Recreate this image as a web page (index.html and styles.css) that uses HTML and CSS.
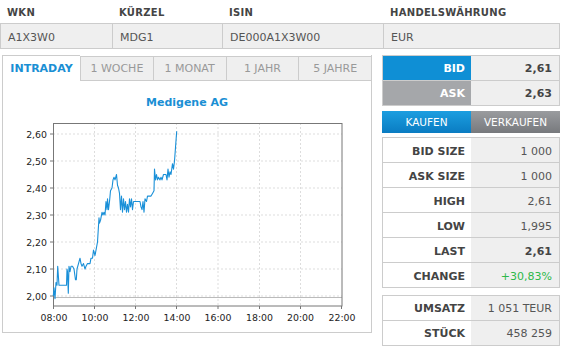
FILE: index.html
```html
<!DOCTYPE html>
<html lang="de">
<head>
  <meta charset="UTF-8">
  <title>Medigene AG</title>
  <link rel="stylesheet" href="styles.css">
</head>
<body>
  <div class="page">
    <div class="info-head">
      <div class="info-label">WKN</div>
      <div class="info-label">KÜRZEL</div>
      <div class="info-label">ISIN</div>
      <div class="info-label">HANDELSWÄHRUNG</div>
    </div>
    <div class="info-row">
      <div class="info-cell">A1X3W0</div>
      <div class="info-cell">MDG1</div>
      <div class="info-cell">DE000A1X3W00</div>
      <div class="info-cell">EUR</div>
    </div>

    <div class="main">
      <div class="chart-box">
        <div class="tabs">
          <div class="tab active">INTRADAY</div>
          <div class="tab">1 WOCHE</div>
          <div class="tab">1 MONAT</div>
          <div class="tab">1 JAHR</div>
          <div class="tab">5 JAHRE</div>
        </div>
        <div class="chart-title">Medigene AG</div>
        <svg class="chart" width="367" height="221" viewBox="3 111 367 221">
          <g class="grid">
            <line x1="53" y1="134" x2="342" y2="134"/>
            <line x1="53" y1="161" x2="342" y2="161"/>
            <line x1="53" y1="188" x2="342" y2="188"/>
            <line x1="53" y1="215" x2="342" y2="215"/>
            <line x1="53" y1="242" x2="342" y2="242"/>
            <line x1="53" y1="269" x2="342" y2="269"/>
            <line x1="53" y1="296" x2="342" y2="296"/>
            <line x1="94.5" y1="123" x2="94.5" y2="306"/>
            <line x1="135.5" y1="123" x2="135.5" y2="306"/>
            <line x1="176.5" y1="123" x2="176.5" y2="306"/>
            <line x1="218" y1="123" x2="218" y2="306"/>
            <line x1="259.5" y1="123" x2="259.5" y2="306"/>
            <line x1="300.5" y1="123" x2="300.5" y2="306"/>
          </g>
          <line class="prev" x1="53" y1="297.5" x2="342" y2="297.5"/>
          <rect class="frame" x="53.5" y="123.5" width="288.5" height="182.5"/>
          <g class="ticks">
            <line x1="50" y1="134" x2="53" y2="134"/>
            <line x1="50" y1="161" x2="53" y2="161"/>
            <line x1="50" y1="188" x2="53" y2="188"/>
            <line x1="50" y1="215" x2="53" y2="215"/>
            <line x1="50" y1="242" x2="53" y2="242"/>
            <line x1="50" y1="269" x2="53" y2="269"/>
            <line x1="50" y1="296" x2="53" y2="296"/>
            <line x1="53.5" y1="306" x2="53.5" y2="309"/>
            <line x1="94.5" y1="306" x2="94.5" y2="309"/>
            <line x1="135.5" y1="306" x2="135.5" y2="309"/>
            <line x1="176.5" y1="306" x2="176.5" y2="309"/>
            <line x1="218" y1="306" x2="218" y2="309"/>
            <line x1="259.5" y1="306" x2="259.5" y2="309"/>
            <line x1="300.5" y1="306" x2="300.5" y2="309"/>
            <line x1="341.5" y1="306" x2="341.5" y2="309"/>
          </g>
          <g class="y-labels">
            <text x="47" y="137.5">2,60</text>
            <text x="47" y="164.5">2,50</text>
            <text x="47" y="191.5">2,40</text>
            <text x="47" y="218.5">2,30</text>
            <text x="47" y="245.5">2,20</text>
            <text x="47" y="272.5">2,10</text>
            <text x="47" y="299.5">2,00</text>
          </g>
          <g class="x-labels">
            <text x="54" y="320.5">08:00</text>
            <text x="95" y="320.5">10:00</text>
            <text x="136" y="320.5">12:00</text>
            <text x="177" y="320.5">14:00</text>
            <text x="218" y="320.5">16:00</text>
            <text x="259.5" y="320.5">18:00</text>
            <text x="300.5" y="320.5">20:00</text>
            <text x="342" y="320.5">22:00</text>
          </g>
          <polyline class="price" points="53.3,296 54,287.9 55,298.7 56,282.5 57,285.2 57.7,266.3 59,285.2 66.5,285.2 67,269 67.5,271.7 68.3,293.3 69,266.3 70,271.7 71,266.3 72.5,266.3 74,269 75.5,279.8 76.3,279.8 77,269 78.5,263.6 80,258.2 81,263.6 82,266.3 83.5,263.6 85,269 86,266.3 87.5,263.6 90,263.6 91,258.2 92.5,258.2 93.5,250.1 95,255.5 96,250.1 97.5,242 99,217.7 99.5,223.1 100.5,220.4 102,212.3 103,215 104,212.3 105,215 106,201.5 107,209.6 107.5,198.8 108.5,209.6 109.5,201.5 110.5,190.7 112,188 113,179.9 114,177.2 115,179.9 116.5,174.5 117.5,185.3 118.5,188 119.5,193.4 120.5,209.6 121.5,196.1 122.5,212.3 123.5,198.8 124.5,209.6 125.5,201.5 126.5,212.3 127.5,204.2 128.5,212.3 129.5,198.8 130.5,206.9 131.5,198.8 132.5,209.6 133.5,201.5 140,201.5 141,206.9 142,209.6 143,201.5 144,212.3 145,198.8 146.5,201.5 147.5,196.1 151,196.1 152.5,193.4 154,190.7 154.5,169.1 155.5,179.9 156.5,174.5 157.5,179.9 158.5,177.2 160,179.9 161,177.2 162,179.9 163.5,174.5 166,174.5 167,179.9 168,169.1 169,177.2 170,171.8 171,174.5 172.5,163.7 173.5,169.1 174.5,161 175.5,147.5 176.7,131.3"/>
        </svg>
      </div>

      <div class="side">
        <div class="kv quote">
          <div class="kv-row">
            <div class="kv-label bid">BID</div>
            <div class="kv-value strong">2,61</div>
          </div>
          <div class="kv-row">
            <div class="kv-label ask">ASK</div>
            <div class="kv-value strong">2,63</div>
          </div>
        </div>

        <div class="trade">
          <button class="btn buy">KAUFEN</button>
          <button class="btn sell">VERKAUFEN</button>
        </div>

        <div class="kv stats">
          <div class="kv-row">
            <div class="kv-label">BID SIZE</div>
            <div class="kv-value">1 000</div>
          </div>
          <div class="kv-row">
            <div class="kv-label">ASK SIZE</div>
            <div class="kv-value">1 000</div>
          </div>
          <div class="kv-row">
            <div class="kv-label">HIGH</div>
            <div class="kv-value">2,61</div>
          </div>
          <div class="kv-row">
            <div class="kv-label">LOW</div>
            <div class="kv-value">1,995</div>
          </div>
          <div class="kv-row">
            <div class="kv-label">LAST</div>
            <div class="kv-value strong">2,61</div>
          </div>
          <div class="kv-row">
            <div class="kv-label">CHANGE</div>
            <div class="kv-value up">+30,83%</div>
          </div>
        </div>

        <div class="kv volume">
          <div class="kv-row">
            <div class="kv-label">UMSATZ</div>
            <div class="kv-value">1 051 TEUR</div>
          </div>
          <div class="kv-row">
            <div class="kv-label">STÜCK</div>
            <div class="kv-value">458 259</div>
          </div>
        </div>
      </div>
    </div>
  </div>
</body>
</html>
```

FILE: styles.css
```css
html, body {
  margin: 0;
  padding: 0;
  background: #fff;
  font-family: "DejaVu Sans", Verdana, sans-serif;
  font-size: 11px;
  color: #555;
}
.page {
  width: 560px;
}

/* stammdaten */
.info-head, .info-row {
  display: grid;
  grid-template-columns: 112px 110px 161px 177px;
}
.info-head {
  height: 21px;
  padding-top: 2px;
}
.info-label {
  display: flex;
  align-items: center;
  padding-left: 7px;
  font-size: 10px;
  font-weight: bold;
  letter-spacing: 0.3px;
  color: #444;
}
.info-row {
  height: 24px;
  border-top: 1px solid #ccc;
  border-bottom: 1px solid #ccc;
  background: #efefef;
}
.info-cell {
  display: flex;
  align-items: center;
  padding: 2px 0 0 7px;
  border-left: 1px solid #ccc;
}
.info-cell:last-child {
  border-right: 1px solid #ccc;
}

.main {
  display: flex;
  align-items: flex-start;
  margin-top: 6px;
}

/* chart */
.chart-box {
  width: 368px;
  margin-left: 2px;
  border: 1px solid #ccc;
  border-top: none;
  background: #fff;
}
.tabs {
  display: flex;
  height: 26px;
}
.tab {
  flex: 1;
  height: 23px;
  margin-top: 1px;
  display: flex;
  align-items: center;
  justify-content: center;
  border-top: 1px solid #ccc;
  border-bottom: 1px solid #ccc;
  border-left: 1px solid #ccc;
  background: #efefef;
  color: #999;
}
.tab.active {
  flex: 0 0 77px;
  height: 25px;
  margin-top: 0;
  border-left: none;
  border-bottom: none;
  background: #fff;
  color: #1a8fd4;
  font-weight: bold;
}
.chart-title {
  height: 30px;
  line-height: 14px;
  padding-top: 0;
  text-align: center;
  color: #1a8fd4;
  font-weight: bold;
  box-sizing: border-box;
  padding-top: 15px;
}
.chart {
  display: block;
}
.grid line {
  stroke: #ddd;
  stroke-width: 1;
  stroke-dasharray: 2 2;
}
.prev {
  stroke: #bbb;
  stroke-width: 1;
}
.frame {
  fill: none;
  stroke: #777;
  stroke-width: 1;
}
.ticks line {
  stroke: #777;
  stroke-width: 1;
}
.chart text {
  font-family: "DejaVu Sans", sans-serif;
  font-size: 9.4px;
  fill: #222;
}
.y-labels text {
  text-anchor: end;
}
.x-labels text {
  text-anchor: middle;
}
.price {
  fill: none;
  stroke: #1a90d8;
  stroke-width: 1.1;
  stroke-linejoin: round;
}

/* rechte spalte */
.side {
  width: 178px;
  margin-left: 10px;
}
.kv {
  border: 1px solid #ccc;
}
.kv-row {
  display: flex;
  height: 24px;
  border-top: 1px solid #ccc;
}
.kv-row:first-child {
  border-top: none;
}
.kv-label {
  width: 88px;
  display: flex;
  align-items: center;
  justify-content: flex-end;
  box-sizing: border-box;
  padding-right: 6px;
  font-weight: bold;
  color: #444;
  background: #fff;
}
.kv-value {
  flex: 1;
  display: flex;
  align-items: center;
  justify-content: flex-end;
  padding-right: 7px;
  background: #efefef;
  color: #555;
}
.stats .kv-label, .stats .kv-value {
  padding-top: 2px;
}
.kv-value.strong {
  font-weight: bold;
  color: #444;
}
.kv-value.up {
  color: #2db84a;
}
.kv-label.bid {
  background: #0f8fd5;
  color: #fff;
}
.kv-label.ask {
  background: #a5a7aa;
  color: #fff;
}
.trade {
  display: flex;
  margin-top: 5px;
}
.btn {
  flex: 1;
  height: 22px;
  border: none;
  padding: 0;
  font-family: "DejaVu Sans", Verdana, sans-serif;
  font-size: 10.5px;
  color: #fff;
  cursor: pointer;
}
.btn.buy {
  background: linear-gradient(#1c9ee0, #0a7cc2);
}
.btn.sell {
  background: linear-gradient(#9a9c9f, #77797d);
}
.stats {
  margin-top: 4px;
}
.volume {
  margin-top: 7px;
}
```
